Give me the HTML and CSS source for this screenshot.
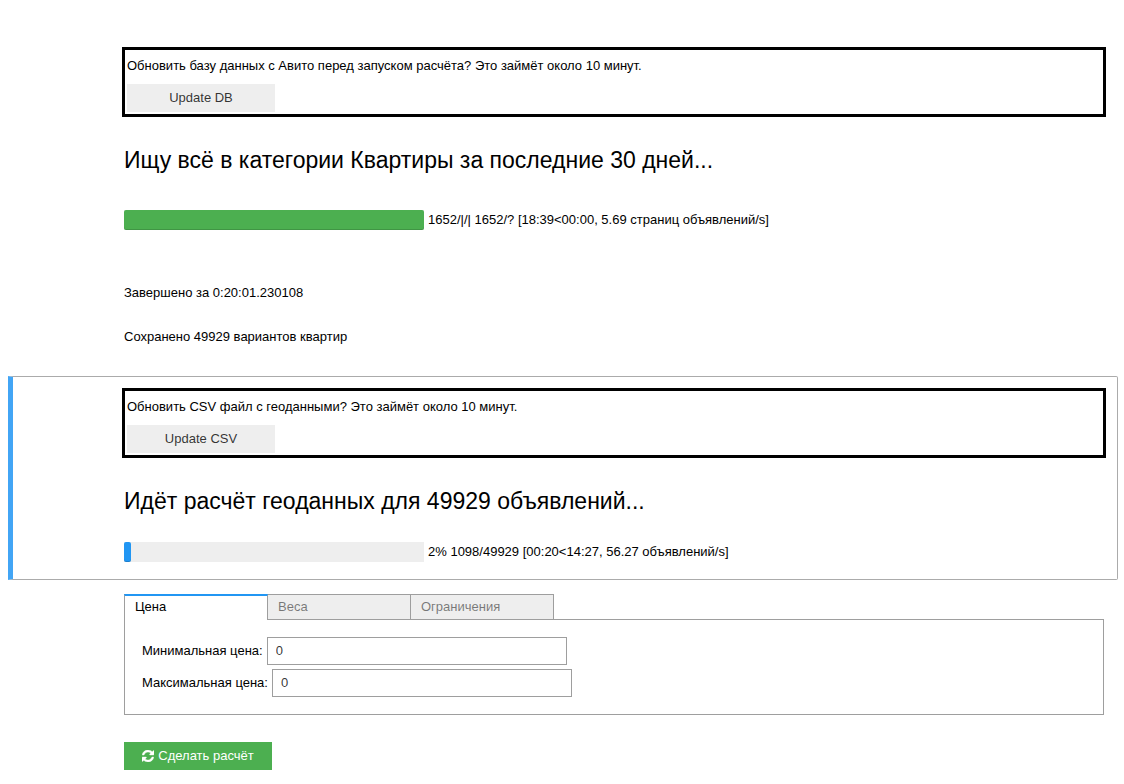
FILE: index.html
```html
<!DOCTYPE html>
<html lang="ru">
<head>
<meta charset="utf-8">
<title>Расчёт</title>
<link rel="stylesheet" href="styles.css">
</head>
<body>
<main class="notebook">
  <section class="cell">
    <div class="box">
      <p class="box-text">Обновить базу данных с Авито перед запуском расчёта? Это займёт около 10 минут.</p>
      <button class="button" type="button">Update DB</button>
    </div>
    <h2 class="title">Ищу всё в категории Квартиры за последние 30 дней...</h2>
    <div class="progress">
      <div class="track"><div class="bar bar-success" style="width: 100%"></div></div>
      <span>1652/|/| 1652/? [18:39&lt;00:00, 5.69 страниц объявлений/s]</span>
    </div>
    <div class="output">
      <p class="line">Завершено за 0:20:01.230108</p>
      <p class="line">Сохранено 49929 вариантов квартир</p>
    </div>
  </section>

  <section class="cell cell-selected">
    <div class="box">
      <p class="box-text">Обновить CSV файл с геоданными? Это займёт около 10 минут.</p>
      <button class="button" type="button">Update CSV</button>
    </div>
    <h2 class="title">Идёт расчёт геоданных для 49929 объявлений...</h2>
    <div class="progress">
      <div class="track"><div class="bar bar-info" style="width: 2.2%"></div></div>
      <span>2% 1098/49929 [00:20&lt;14:27, 56.27 объявлений/s]</span>
    </div>
  </section>

  <section class="cell cell-form">
    <div class="tabs" role="tablist">
      <button class="tab tab-current" type="button" role="tab" aria-selected="true">Цена</button>
      <button class="tab" type="button" role="tab" aria-selected="false">Веса</button>
      <button class="tab" type="button" role="tab" aria-selected="false">Ограничения</button>
    </div>
    <div class="panel" role="tabpanel">
      <div class="field">
        <label for="min-price">Минимальная цена:</label>
        <input class="input" id="min-price" type="text" value="0">
      </div>
      <div class="field">
        <label for="max-price">Максимальная цена:</label>
        <input class="input" id="max-price" type="text" value="0">
      </div>
    </div>
    <button class="button button-success" type="button">
      <svg class="icon" viewBox="0 0 1536 1536" aria-hidden="true"><path fill="currentColor" stroke="currentColor" stroke-width="50" d="M1511 928q0 5-1 7-64 268-268 434.500T764 1536q-146 0-282.500-55T238 1324l-129 129q-19 19-45 19t-45-19-19-45V960q0-26 19-45t45-19h448q26 0 45 19t19 45-19 45l-137 137q71 66 161 102t187 36q134 0 250-65t186-179q11-17 53-117 8-23 30-23h192q13 0 22.500 9.500t9.500 22.500zM1536 128v448q0 26-19 45t-45 19h-448q-26 0-45-19t-19-45 19-45l138-138q-148-137-349-137-134 0-250 65T332 500q-11 17-53 117-8 23-30 23H50q-13 0-22.500-9.500T18 608v-7q65-268 270-434.500T768 0q146 0 284 55.500T1297 212l130-129q19-19 45-19t45 19 19 45z"/></svg>
      Сделать расчёт
    </button>
  </section>
</main>
</body>
</html>
```
FILE: styles.css
```css
* {
  box-sizing: border-box;
}

body {
  margin: 0;
  background: #fff;
  color: #000;
  font: 13px/20px "Liberation Sans", Arial, sans-serif;
}

p,
h2 {
  margin: 0;
}

.notebook {
  padding: 36px 6px 14px 8px;
}

.cell {
  padding: 11px 12px 18px 114px;
}

.cell-selected {
  padding: 11px 11px 17px 109px;
  border: 1px solid #ababab;
  border-left: 5px solid #42a5f5;
  border-radius: 0 2px 2px 0;
}

.cell-form {
  padding: 14px 14px 0 116px;
}

.box {
  display: flex;
  flex-direction: column;
  align-items: flex-start;
  gap: 4px;
  padding: 2px;
  border: 3px solid #000;
}

.box-text {
  line-height: 28px;
}

.button {
  width: 148px;
  height: 28px;
  padding: 0 10px;
  border: 0;
  background: #eee;
  color: rgba(0, 0, 0, 0.8);
  font: inherit;
  line-height: 28px;
  text-align: center;
}

.button-success {
  display: flex;
  align-items: center;
  justify-content: center;
  gap: 4px;
  margin-top: 27px;
  background: #4caf50;
  color: #fff;
}

.icon {
  width: 12px;
  height: 12px;
}

.title {
  padding: 28px 2px 0;
  font-size: 23px;
  font-weight: 400;
  line-height: 30px;
}

.progress {
  display: flex;
  align-items: center;
  gap: 4px;
  margin-top: 35px;
  padding: 0 2px;
}

.cell-selected .progress {
  margin-top: 26px;
}

.track {
  width: 300px;
  height: 20px;
  background: #eee;
}

.bar {
  height: 20px;
  border-radius: 2px;
  box-shadow: inset 0 -1px 0 rgba(0, 0, 0, 0.15);
}

.bar-success {
  background-color: #4caf50;
}

.bar-info {
  background-color: #2196f3;
}

.output {
  display: flex;
  flex-direction: column;
  gap: 24px;
  padding: 53px 2px 11px;
}

.tabs {
  display: flex;
}

.tab {
  width: 144px;
  height: 26px;
  margin: 0 0 -1px -1px;
  padding: 0 10px;
  border: 1px solid #9e9e9e;
  background: #eee;
  color: rgba(0, 0, 0, 0.5);
  font: inherit;
  line-height: 24px;
  text-align: left;
}

.tab-current {
  position: relative;
  margin-left: 0;
  padding-bottom: 2px;
  border-top: 2px solid #2196f3;
  border-bottom: 0;
  background: #fff;
  color: #000;
  line-height: 22px;
}

.panel {
  display: flex;
  flex-direction: column;
  gap: 4px;
  padding: 17px;
  border: 1px solid #9e9e9e;
}

.field {
  display: flex;
  align-items: center;
  gap: 4px;
}

.input {
  width: 300px;
  height: 28px;
  padding: 3px 8px 5px;
  border: 1px solid #9e9e9e;
  border-radius: 0;
  background: #fff;
  color: rgba(0, 0, 0, 0.8);
  font: inherit;
}
```
